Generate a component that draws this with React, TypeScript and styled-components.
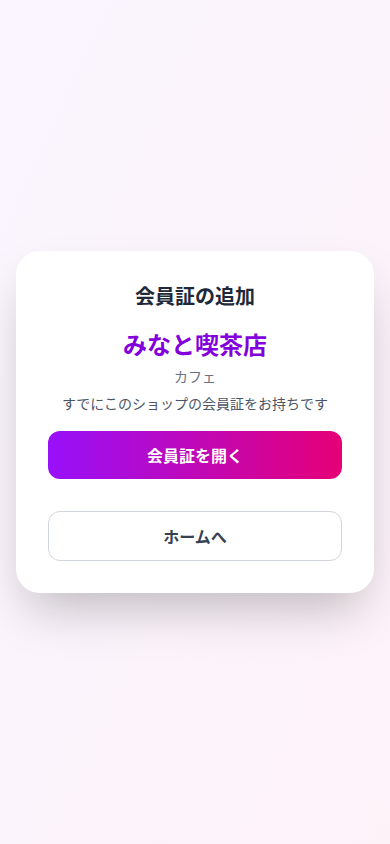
import styled, { createGlobalStyle } from "styled-components";

const GlobalStyle = createGlobalStyle`
  * { box-sizing: border-box; }
  html, body {
    margin: 0;
    padding: 0;
  }
  body {
    font-family: Inter, "Noto Sans CJK JP", sans-serif;
  }
`;

const Page = styled.div`
  min-height: 844px;
  background: linear-gradient(to bottom right, #faf5ff, #fdf2f8);
  display: flex;
  align-items: center;
  justify-content: center;
  padding: 16px;
`;

const Card = styled.div`
  width: 100%;
  background: #ffffff;
  border-radius: 24px;
  box-shadow: 0 25px 50px -12px rgba(0, 0, 0, 0.25);
  padding: 32px;
  text-align: center;
`;

const Title = styled.h1`
  margin: 0 0 19px;
  font-size: 20px;
  line-height: 28px;
  font-weight: 700;
  color: #1e2939;
`;

const ShopName = styled.h2`
  margin: 0 0 5px;
  font-size: 24px;
  line-height: 32px;
  font-weight: 700;
  color: #8200db;
`;

const Text = styled.p<{ $tone: string; $gap: number }>`
  margin: 0 0 ${(p) => p.$gap}px;
  font-size: 14px;
  line-height: 20px;
  color: ${(p) => p.$tone};
`;

const Actions = styled.div`
  display: flex;
  flex-direction: column;
  gap: 32px;
`;

const Button = styled.button<{ $primary?: boolean }>`
  width: 100%;
  height: ${(p) => (p.$primary ? 48 : 50)}px;
  border-radius: 12px;
  font-family: inherit;
  font-size: 16px;
  font-weight: 700;
  cursor: pointer;
  border: ${(p) => (p.$primary ? "none" : "1px solid #d1d5dc")};
  background: ${(p) =>
    p.$primary ? "linear-gradient(to right, #9810fa, #e60076)" : "#ffffff"};
  color: ${(p) => (p.$primary ? "#ffffff" : "#364153")};
`;

export default function App() {
  return (
    <>
      <GlobalStyle />
      <Page>
        <Card>
          <Title>会員証の追加</Title>
          <ShopName>みなと喫茶店</ShopName>
          <Text $tone="#6a7282" $gap={7}>カフェ</Text>
          <Text $tone="#4a5565" $gap={17}>すでにこのショップの会員証をお持ちです</Text>
          <Actions>
            <Button $primary>会員証を開く</Button>
            <Button>ホームへ</Button>
          </Actions>
        </Card>
      </Page>
    </>
  );
}
